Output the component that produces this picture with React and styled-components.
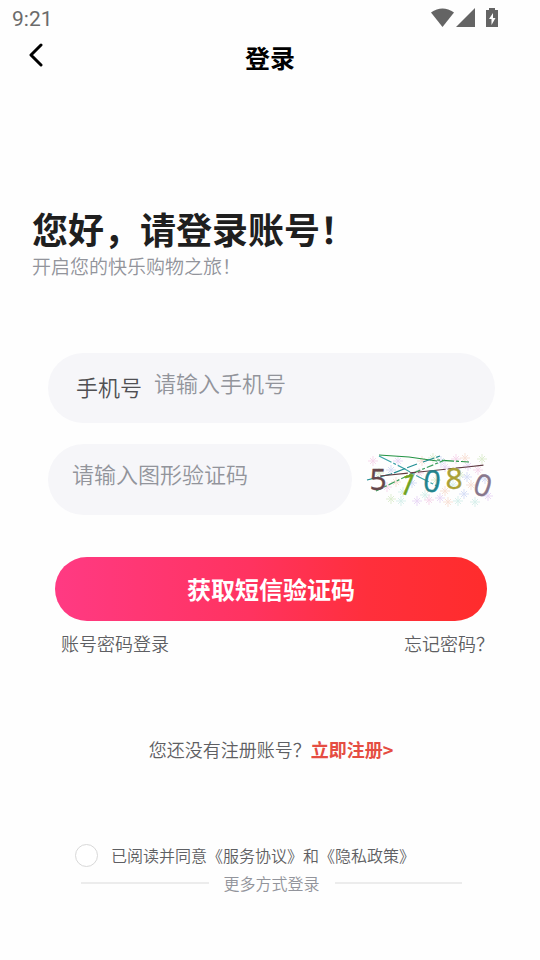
import React from "react";
import styled, { createGlobalStyle } from "styled-components";

const GlobalStyle = createGlobalStyle`
  * {
    box-sizing: border-box;
  }
  body {
    margin: 0;
    background: #fefefe;
    font-family: "Noto Sans CJK SC", sans-serif;
    font-weight: 350;
    color: #5e5f63;
  }
  button,
  input {
    font-family: inherit;
  }
`;

const flakeColors = ["#f6d9ec", "#dfeed2", "#d8dff6", "#eadaf6", "#f8e2d8", "#d9f0ec"];
const flakes = [
  [8, 8], [14, 20], [26, 17], [33, 8], [31, 29], [38, 39], [22, 34], [26, 46],
  [47, 30], [52, 48], [57, 8], [60, 42], [64, 47], [71, 27], [76, 8], [80, 14],
  [83, 49], [88, 32], [91, 6], [95, 22], [99, 41], [103, 13], [106, 32], [110, 49],
  [113, 17], [117, 6], [120, 26], [123, 43], [80, 38], [93, 48], [54, 20], [68, 5],
  [102, 24], [75, 45], [100, 5], [36, 48],
];

const digits = [
  { char: "5", x: 13, y: 26, color: "#65464a", turn: 0 },
  { char: "1", x: 43, y: 31, color: "#72a321", turn: 22 },
  { char: "0", x: 67, y: 28, color: "#23848d", turn: 7 },
  { char: "8", x: 89, y: 25, color: "#aaa035", turn: 0 },
  { char: "0", x: 118, y: 32, color: "#88778c", turn: 17 },
];

function Captcha() {
  return (
    <CaptchaImage viewBox="0 0 130 54" role="img" aria-label="图形验证码">
      {flakes.map(([x, y], i) => (
        <path
          key={i}
          d={`M${x - 5} ${y}h10M${x} ${y - 5}v10M${x - 3} ${y - 3}l6 6M${x + 3} ${y - 3}l-6 6`}
          stroke={flakeColors[i % flakeColors.length]}
        />
      ))}
      <g fill="none" strokeWidth="1.2">
        <path d="M14 2L44 4L72 8" stroke="#239344" />
        <path d="M72 7L104 9" stroke="#239344" strokeDasharray="3 2 12 2" />
        <path d="M14 3L38 15L54 24L72 33" stroke="#3aa3a8" strokeDasharray="14 2 3 2" />
        <path d="M2 27L26 21L52 11" stroke="#218d92" strokeDasharray="12 2" />
        <path d="M58 9L75 3" stroke="#218d92" strokeDasharray="12 2" />
        <path d="M11 38L46 21L80 7" stroke="#3ca05d" strokeDasharray="7 2 3 2" />
        <path d="M15 23L54 19L102 14L120 12" stroke="#603b42" strokeDasharray="28 2 6 2" />
      </g>
      {digits.map(({ char, x, y, color, turn }) => (
        <text
          key={x}
          x={x}
          y={y + 11}
          fill={color}
          stroke={color}
          textAnchor="middle"
          transform={`rotate(${turn} ${x} ${y})`}
        >
          {char}
        </text>
      ))}
    </CaptchaImage>
  );
}

function App() {
  return (
    <Page>
      <GlobalStyle />
      <StatusBar>
        <span>9:21</span>
        <StatusIcons viewBox="0 0 68 20" aria-hidden="true">
          <path d="M0 4.500Q11.500-3.500 23 4.500L11.500 19z" />
          <path d="M44 0v19H25z" />
          <path d="M58 0h6v2h3v17H55V2h3z" />
          <path d="M62 5l-4 6h2.500v6l4-7H62z" fill="#fff" />
        </StatusIcons>
      </StatusBar>
      <Header>
        <BackButton type="button" aria-label="返回">
          <svg width="16" height="24" viewBox="0 0 16 24" fill="none">
            <path
              d="M13 2L3 12L13 22"
              stroke="#000"
              strokeWidth="3"
              strokeLinecap="round"
              strokeLinejoin="round"
            />
          </svg>
        </BackButton>
        <h1>登录</h1>
      </Header>
      <Greeting>
        <h2>您好，请登录账号！</h2>
        <p>开启您的快乐购物之旅！</p>
      </Greeting>
      <Form onSubmit={(e) => e.preventDefault()}>
        <Field>
          <label htmlFor="phone">手机号</label>
          <TextInput id="phone" type="tel" placeholder="请输入手机号" />
        </Field>
        <CaptchaRow>
          <Field $compact>
            <TextInput type="text" aria-label="图形验证码" placeholder="请输入图形验证码" />
          </Field>
          <Captcha />
        </CaptchaRow>
        <SubmitButton type="submit">获取短信验证码</SubmitButton>
        <FormLinks>
          <TextLink href="#password">账号密码登录</TextLink>
          <TextLink href="#forgot">忘记密码？</TextLink>
        </FormLinks>
      </Form>
      <Register>
        您还没有注册账号？<RegisterLink href="#register">立即注册&gt;</RegisterLink>
      </Register>
      <Agreement>
        <Radio type="radio" id="agree" />
        <label htmlFor="agree">已阅读并同意《服务协议》和《隐私政策》</label>
      </Agreement>
      <Divider>更多方式登录</Divider>
    </Page>
  );
}

export default App;

const Page = styled.main`
  display: flex;
  flex-direction: column;
`;

const StatusBar = styled.div`
  display: flex;
  justify-content: space-between;
  align-items: center;
  height: 36px;
  padding: 0 41px 0 12px;
  font-family: Roboto, sans-serif;
  font-size: 21px;
  font-weight: 400;
  line-height: 24px;
  color: #6b6b6b;
  span {
    padding-top: 2px;
  }
`;

const StatusIcons = styled.svg`
  width: 68px;
  height: 20px;
  fill: #646464;
`;

const Header = styled.header`
  display: grid;
  grid-template-columns: 48px 1fr 48px;
  align-items: center;
  height: 42px;
  padding: 0 12px;
  h1 {
    margin: 0;
    font-size: 25px;
    line-height: 36px;
    font-weight: 700;
    text-align: center;
    color: #000;
  }
`;

const BackButton = styled.button`
  display: flex;
  justify-content: center;
  padding: 0 0 4px;
  border: 0;
  background: none;
`;

const Greeting = styled.section`
  margin-top: 125px;
  padding: 0 32px;
  h2 {
    margin: 0;
    font-size: 36px;
    line-height: 50px;
    font-weight: 700;
    color: #1f1f1f;
  }
  p {
    margin: 0;
    font-size: 19px;
    line-height: 26px;
    color: #92949b;
  }
`;

const Form = styled.form`
  display: flex;
  flex-direction: column;
  margin-top: 74px;
  padding: 0 45px 0 48px;
`;

const Field = styled.div`
  display: flex;
  align-items: center;
  gap: 12px;
  flex: 1;
  min-width: 0;
  min-height: 70px;
  padding: 0 24px 4px ${(props) => (props.$compact ? "24px" : "28px")};
  border-radius: 36px;
  background: #f6f6f9;
  font-size: 22px;
  label {
    color: #505053;
    white-space: nowrap;
  }
`;

const TextInput = styled.input`
  flex: 1;
  min-width: 0;
  height: 40px;
  padding: 0;
  margin-bottom: 9px;
  border: 0;
  outline: 0;
  background: none;
  font-size: 22px;
  font-weight: 350;
  color: #505053;
  &::placeholder {
    color: #92949b;
    opacity: 1;
  }
`;

const CaptchaRow = styled.div`
  display: flex;
  align-items: center;
  gap: 13px;
  margin-top: 21px;
  ${Field} {
    min-height: 71px;
  }
`;

const CaptchaImage = styled.svg`
  width: 130px;
  height: 54px;
  overflow: visible;
  font-family: "Open Sans", sans-serif;
  font-size: 30px;
  font-weight: 400;
  text {
    stroke-width: 0.4px;
  }
`;

const SubmitButton = styled.button`
  height: 64px;
  margin: 42px 8px 0 7px;
  padding: 0 0 1px;
  border: 0;
  border-radius: 32px;
  background: linear-gradient(90deg, #ff3a83 0%, #ff3360 45%, #ff2f3c 72%, #ff2c2c 100%);
  color: #fff;
  font-size: 24px;
  font-weight: 700;
`;

const FormLinks = styled.div`
  display: flex;
  justify-content: space-between;
  margin-top: 9px;
  padding: 0 1px 0 13px;
`;

const TextLink = styled.a`
  color: #5e5f63;
  font-size: 18px;
  line-height: 26px;
  text-decoration: none;
`;

const Register = styled.p`
  margin: 80px 0 0;
  padding-left: 2px;
  text-align: center;
  font-size: 18px;
  line-height: 26px;
`;

const RegisterLink = styled.a`
  color: #e54d42;
  font-weight: 700;
  text-decoration: none;
`;

const Agreement = styled.div`
  display: flex;
  align-items: center;
  gap: 13px;
  margin-top: 80px;
  padding-left: 75px;
  font-size: 16px;
  line-height: 26px;
`;

const Radio = styled.input`
  appearance: none;
  width: 23px;
  height: 23px;
  margin: 0;
  border: 1px solid #d8d8d8;
  border-radius: 50%;
  background: #fff;
`;

const Divider = styled.div`
  display: flex;
  align-items: center;
  gap: 15px;
  margin-top: 2px;
  padding: 0 78px 0 81px;
  font-size: 16px;
  line-height: 26px;
  color: #92949b;
  &::before,
  &::after {
    content: "";
    flex: 1;
    height: 2px;
    background: #ececec;
  }
`;
